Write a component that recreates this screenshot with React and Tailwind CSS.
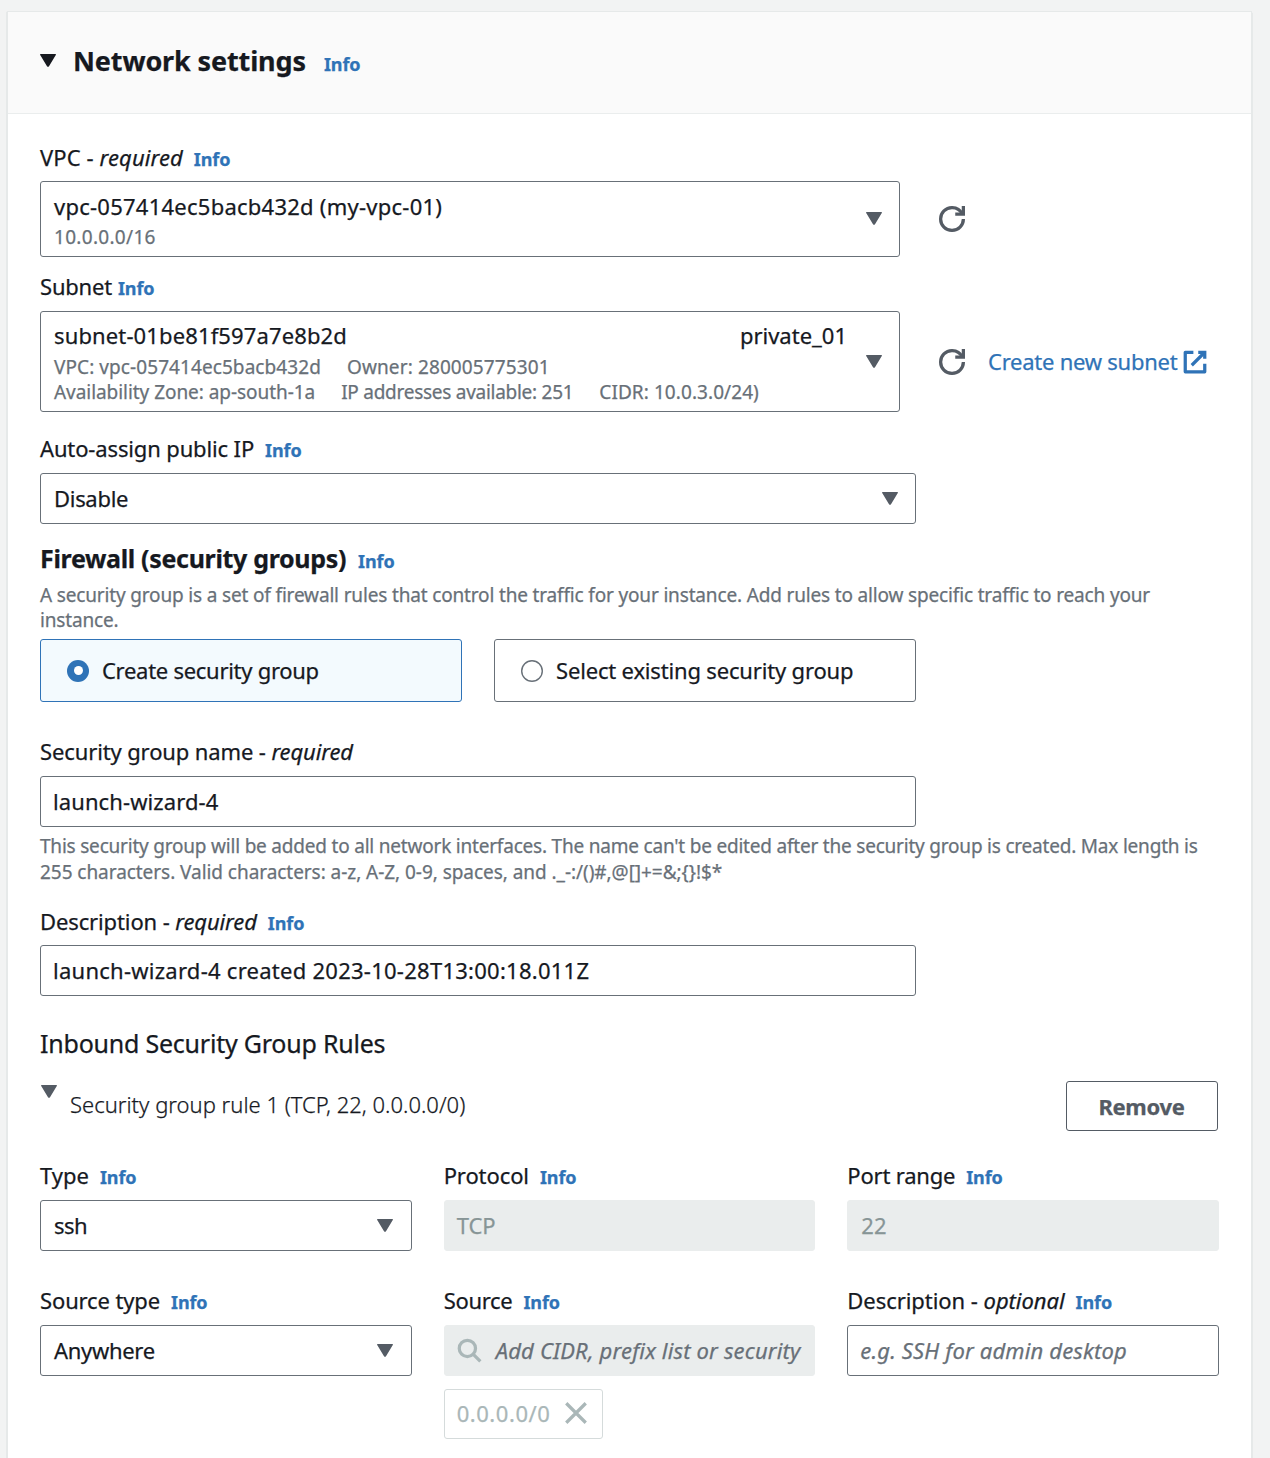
import React from "react";
import clsx from "clsx";

function Caret({ className = "text-[#545b64]" }) {
  return (
    <svg viewBox="0 0 16 13" className={clsx("h-[13px] w-4 shrink-0", className)} fill="currentColor">
      <path d="M.6 0h14.8c.6 0 .7.5.4.9L9 12.2c-.5.8-1.500.8-2 0L.2.9C-.1.500 0 0 .6 0z" />
    </svg>
  );
}

function Refresh() {
  return (
    <svg viewBox="0 0 16 16" className="size-[26px] shrink-0 text-[#545b64]" fill="none" stroke="currentColor" strokeWidth="2">
      <path d="M10 5h5V0" />
      <path d="M15 8a6.957 6.957 0 0 1-7 7 6.957 6.957 0 0 1-7-7 6.957 6.957 0 0 1 7-7 6.87 6.87 0 0 1 6.3 4" />
    </svg>
  );
}

function External() {
  return (
    <svg viewBox="0 0 16 16" className="size-[26px] shrink-0" fill="none" stroke="currentColor" strokeWidth="2" strokeLinejoin="round">
      <path d="M10 2h4v4" strokeLinejoin="miter" />
      <path d="m6 10 8-8" />
      <path d="M14 9.048V14H2V2h5" />
    </svg>
  );
}

function Search() {
  return (
    <svg viewBox="0 0 16 16" className="size-[26px] shrink-0 text-[#aab7b8]" fill="none" stroke="currentColor" strokeWidth="2">
      <circle cx="7" cy="7" r="5" />
      <path d="m15 15-4.500-4.500" />
    </svg>
  );
}

function Close() {
  return (
    <svg viewBox="0 0 16 16" className="size-[26px] shrink-0" fill="none" stroke="currentColor" strokeWidth="2">
      <path d="m2 2 12 12M14 2 2 14" />
    </svg>
  );
}

function Info() {
  return <a className="text-[18px] font-bold tracking-[-0.1px] text-[#2f73b7]">Info</a>;
}

function Label({ children, info = true, className, gap = "gap-[11px]" }) {
  return (
    <div className={clsx("flex h-[29px] items-baseline whitespace-nowrap leading-[29px]", gap)}>
      <span className={className}>{children}</span>
      {info && <Info />}
    </div>
  );
}

function Box({ children, className, disabled, pr = "pr-[17px]" }) {
  return (
    <div
      className={clsx(
        "flex h-[51px] items-center overflow-hidden whitespace-nowrap rounded-[3px] border pl-[13px]",
        pr,
        disabled ? "border-[#eaeded] bg-[#eaeded] text-[#879596]" : "border-[#687078] bg-white",
        className
      )}
    >
      {children}
    </div>
  );
}

export default function App() {
  return (
    <div className="h-[1458px] overflow-hidden bg-[#f2f3f3] pl-2 pr-[19px] pt-3 font-['Noto_Sans',sans-serif] text-[22px] text-[#16191f] [-webkit-text-stroke:0.25px]">
      <section className="h-[1500px] bg-white shadow-[0_0_0_1px_#e6e9e9,-1px_0_1px_0_#aab7b8,1px_1px_1px_0_#aab7b8]">
        <header className="flex h-[102px] items-center border-b border-[#eaeded] bg-[#fafafa] pl-8">
          <Caret className="mb-[5px] text-[#16191f]" />
          <div className="mb-[3px] ml-[17px] flex h-[30px] items-baseline gap-[18px] leading-[30px]">
            <h2 className="text-[27px] font-bold tracking-[-0.13px]">Network settings</h2>
            <Info />
          </div>
        </header>

        <div className="px-8 pt-[29px]">
          <Label className="tracking-[0.1px]">
            VPC - <i>required</i>
          </Label>
          <div className="mt-[9px] flex items-center">
            <Box className="h-[76px] w-[860px] justify-between">
              <div className="pt-[5px]">
                <div className="leading-[30px] tracking-[0.25px]">vpc-057414ec5bacb432d (my-vpc-01)</div>
                <div className="mt-[2px] text-[19px] leading-[29px] tracking-[0.3px] text-[#687078]">10.0.0.0/16</div>
              </div>
              <Caret className="mb-px text-[#545b64]" />
            </Box>
            <div className="ml-[39px]">
              <Refresh />
            </div>
          </div>

          <div className="mt-[15px]">
            <Label className="tracking-[-0.2px]" gap="gap-[6px]">Subnet</Label>
          </div>
          <div className="mt-[10px] flex items-center">
            <Box className="h-[101px] w-[860px] justify-between">
              <div className="w-[793px] pt-[2px]">
                <div className="flex justify-between leading-[30px]">
                  <span className="tracking-[0.13px]">subnet-01be81f597a7e8b2d</span>
                  <span>private_01</span>
                </div>
                <div className="mt-[5px] flex gap-[26px] text-[19px] leading-[25px] text-[#687078]">
                  <span className="tracking-[0.08px]">VPC: vpc-057414ec5bacb432d</span>
                  <span className="tracking-[0.12px]">Owner: 280005775301</span>
                </div>
                <div className="flex gap-[26px] text-[19px] leading-[25px] text-[#687078]">
                  <span className="tracking-[-0.05px]">Availability Zone: ap-south-1a</span>
                  <span className="tracking-[-0.27px]">IP addresses available: 251</span>
                  <span className="tracking-[0.07px]">CIDR: 10.0.3.0/24)</span>
                </div>
              </div>
              <Caret />
            </Box>
            <div className="ml-[39px]">
              <Refresh />
            </div>
            <a className="ml-[23px] flex items-center gap-[5px] whitespace-nowrap text-[#2f73b7]">
              <span className="leading-[29px] tracking-[-0.24px]">Create new subnet</span>
              <External />
            </a>
          </div>

          <div className="mt-[22px]">
            <Label className="tracking-[-0.14px]">Auto-assign public IP</Label>
          </div>
          <Box className="mt-[10px] w-[876px] justify-between">
            <span className="tracking-[-0.3px]">Disable</span>
            <Caret />
          </Box>

          <div className="mt-[20px] flex h-[29px] items-baseline gap-[12px] leading-[29px]">
            <h3 className="text-[25px] font-bold tracking-[-0.33px]">Firewall (security groups)</h3>
            <Info />
          </div>
          <p className="mt-[10px] whitespace-nowrap text-[19px] leading-[25px] tracking-[-0.16px] text-[#687078]">
            A security group is a set of firewall rules that control the traffic for your instance. Add rules to allow specific traffic to reach your
            <br />
            instance.
          </p>
          <div className="mt-[6px] grid w-[876px] grid-cols-2 gap-8">
            <div className="flex h-[63px] items-center rounded-[3px] border border-[#2f73b7] bg-[#f3fafe] pl-[26px]">
              <span className="flex size-[22px] items-center justify-center rounded-full bg-[#2f73b7]">
                <span className="size-[9px] rounded-full bg-white" />
              </span>
              <span className="ml-[13px] tracking-[-0.28px]">Create security group</span>
            </div>
            <div className="flex h-[63px] items-center rounded-[3px] border border-[#687078] bg-white pl-[26px]">
              <svg viewBox="0 0 22 22" className="size-[22px]" fill="none" stroke="#687078" strokeWidth="1.4">
                <circle cx="11" cy="11" r="10.3" />
              </svg>
              <span className="ml-[13px] tracking-[-0.17px]">Select existing security group</span>
            </div>
          </div>

          <div className="mt-[35px]">
            <Label info={false} className="tracking-[-0.12px]">
              Security group name - <i>required</i>
            </Label>
          </div>
          <Box className="mt-[10px] w-[876px]">
            <span className="-ml-px tracking-[0.1px]">launch-wizard-4</span>
          </Box>
          <p className="mt-[6px] whitespace-nowrap text-[19px] leading-[26px] tracking-[-0.205px] text-[#687078]">
            This security group will be added to all network interfaces. The name can't be edited after the security group is created. Max length is
            <br />
            <span className="tracking-[-0.05px]">{"255 characters. Valid characters: a-z, A-Z, 0-9, spaces, and ._-:/()#,@[]+=&;{}!$*"}</span>
          </p>

          <div className="mt-[22px]">
            <Label className="tracking-[-0.12px]">
              Description - <i>required</i>
            </Label>
          </div>
          <Box className="mt-[9px] w-[876px]">
            <span className="-ml-px tracking-[0.26px]">launch-wizard-4 created 2023-10-28T13:00:18.011Z</span>
          </Box>

          <h3 className="mt-[33px] text-[25px] leading-[29px] tracking-[-0.22px]">Inbound Security Group Rules</h3>
          <div className="mt-[23px] flex h-[50px] items-start">
            <Caret className="ml-px mt-[4px] text-[#545b64]" />
            <span className="ml-[13px] mt-[9px] font-light leading-[29px] tracking-[0.01px]">Security group rule 1 (TCP, 22, 0.0.0.0/0)</span>
            <button className="ml-auto mr-px h-[50px] w-[152px] rounded-[3px] border border-[#545b64] pr-px font-bold leading-[48px] tracking-[-0.3px] text-[#545b64]">
              Remove
            </button>
          </div>

          <div className="mt-[30px] grid grid-cols-3 gap-8">
            <div>
              <Label>Type</Label>
              <Box className="mt-[10px] justify-between" pr="pr-[18px]">
                <span className="tracking-[-0.5px]">ssh</span>
                <Caret />
              </Box>
            </div>
            <div>
              <Label className="tracking-[-0.1px]">Protocol</Label>
              <Box disabled className="mt-[10px]"><span className="-ml-px">TCP</span></Box>
            </div>
            <div>
              <Label className="tracking-[-0.2px]">Port range</Label>
              <Box disabled className="mt-[10px]">22</Box>
            </div>
          </div>

          <div className="mt-[35px] grid grid-cols-3 gap-8">
            <div>
              <Label className="tracking-[-0.13px]">Source type</Label>
              <Box className="mt-[10px] justify-between" pr="pr-[18px]">
                <span className="tracking-[-0.3px]">Anywhere</span>
                <Caret />
              </Box>
            </div>
            <div>
              <Label className="tracking-[-0.3px]">Source</Label>
              <Box disabled className="mt-[10px]" pr="pr-0">
                <span className="-ml-[2px] -mt-[2px]">
                  <Search />
                </span>
                <i className="ml-[14px] tracking-[0.17px] text-[#687078]">Add CIDR, prefix list or security</i>
              </Box>
              <div className="mt-[13px] flex h-[50px] w-[159px] items-center rounded-[3px] border border-[#d5dbdb] pl-[12px] text-[#aab7b8]">
                <span className="-mt-[2px] tracking-[0.55px]">0.0.0.0/0</span>
                <span className="-mt-[2px] ml-[13px]">
                  <Close />
                </span>
              </div>
            </div>
            <div>
              <Label className="tracking-[-0.05px]">
                Description - <i>optional</i>
              </Label>
              <Box className="mt-[10px]">
                <i className="-ml-px tracking-[0.15px] text-[#687078]">e.g. SSH for admin desktop</i>
              </Box>
            </div>
          </div>
        </div>
      </section>
    </div>
  );
}
